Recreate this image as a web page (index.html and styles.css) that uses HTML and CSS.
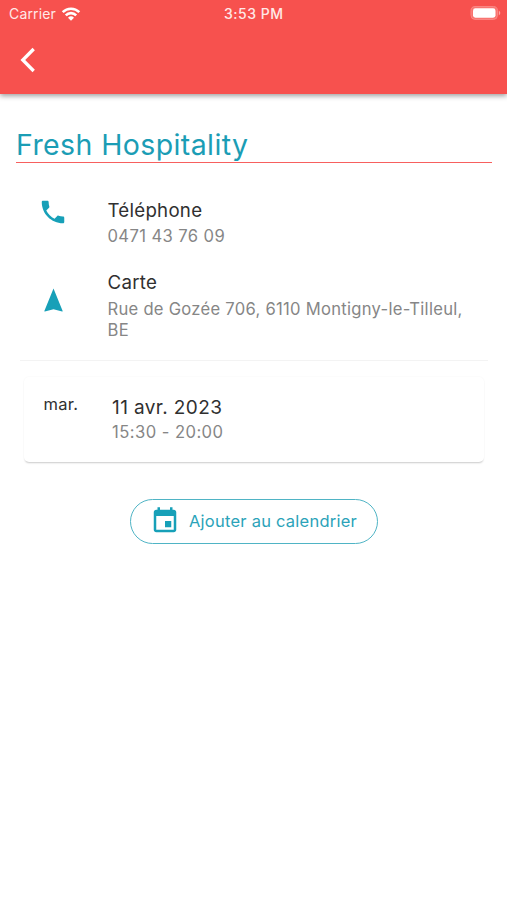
FILE: index.html
```html
<!DOCTYPE html>
<html lang="fr">
<head>
<meta charset="utf-8">
<title>Fresh Hospitality</title>
<link rel="stylesheet" href="styles.css">
</head>
<body>
<header class="app-bar">
  <div class="status">
    <div class="carrier">
      <span class="carrier-name">Carrier</span>
      <svg class="wifi" width="20" height="14" viewBox="0 0 20 14" fill="none" stroke="#fff" stroke-width="2.6">
        <path d="M1.7 5.2a11.8 11.8 0 0 1 16.6 0M4.8 8.3a7.4 7.4 0 0 1 10.4 0"/>
        <path d="M10 13.8L7 10.8a4.3 4.3 0 0 1 6 0z" fill="#fff" stroke="none"/>
      </svg>
    </div>
    <span class="time">3:53 PM</span>
    <svg class="battery" width="31" height="14" viewBox="0 0 31 14">
      <rect x="1" y=".6" width="26.4" height="12.8" rx="4" fill="#f9736f" stroke="#fa8a87"/>
      <rect x="3" y="2.3" width="22.5" height="9.4" rx="2.4" fill="#fff"/>
      <path d="M28.8 4.6q3 2.4 0 4.8z" fill="#fba5a3"/>
    </svg>
  </div>
  <button class="back" aria-label="Retour">
    <svg width="18" height="26" viewBox="0 0 18 26" fill="none" stroke="#fff" stroke-width="3.3"><path d="M15.7 2L4.8 13l10.9 11"/></svg>
  </button>
</header>
<main class="content">
  <h1 class="title">Fresh Hospitality</h1>
  <section class="row phone">
    <svg class="icon" width="30" height="30" viewBox="0 0 24 24"><path d="M6.62 10.79c1.44 2.83 3.76 5.14 6.59 6.59l2.2-2.2c.27-.27.67-.36 1.02-.24 1.12.37 2.33.57 3.57.57.55 0 1 .45 1 1V20c0 .55-.45 1-1 1-9.39 0-17-7.61-17-17 0-.55.45-1 1-1h3.5c.55 0 1 .45 1 1 0 1.25.2 2.45.57 3.57.11.35.03.74-.25 1.02l-2.2 2.2z"/></svg>
    <div>
      <div class="label">Téléphone</div>
      <div class="detail">0471 43 76 09</div>
    </div>
  </section>
  <section class="row map">
    <svg class="icon" width="30" height="30" viewBox="0 0 24 24"><path d="M12.4 2L5 20.2l.5.2 6.9-1.8 6.9 1.8.5-.2z"/></svg>
    <div>
      <div class="label">Carte</div>
      <div class="detail">Rue de Gozée 706, 6110 Montigny-le-Tilleul,<br>BE</div>
    </div>
  </section>
  <hr class="divider">
  <section class="card">
    <div class="day">mar.</div>
    <div>
      <div class="label date">11 avr. 2023</div>
      <div class="detail hours">15:30 - 20:00</div>
    </div>
  </section>
  <button class="calendar">
    <svg class="icon" width="30" height="30" viewBox="0 0 24 24"><path d="M17 12h-5v5h5v-5zM16 1v2H8V1H6v2H5c-1.11 0-1.99.9-1.99 2L3 19c0 1.1.89 2 2 2h14c1.1 0 2-.9 2-2V5c0-1.1-.9-2-2-2h-1V1h-2zm3 18H5V8h14v11z"/></svg>
    <span>Ajouter au calendrier</span>
  </button>
</main>
</body>
</html>
```
FILE: styles.css
```css
* { box-sizing: border-box; }
body {
  margin: 0;
  min-height: 900px;
  background: #fff;
  font-family: Inter, "Liberation Sans", sans-serif;
  color: #303030;
}
button { font: inherit; background: none; border: 0; padding: 0; }
.app-bar {
  height: 94px;
  background: #f7514e;
  box-shadow: 0 2px 5px rgba(0, 0, 0, .38);
}
.status {
  height: 27px;
  padding: 0 6px 0 9px;
  display: grid;
  grid-template-columns: 215px 1fr auto;
  align-items: center;
  color: #ffe9e8;
}
.carrier { display: flex; align-items: center; gap: 5px; }
.carrier-name { font-size: 14px; letter-spacing: .15px; }
.time { font-size: 14px; font-weight: 500; letter-spacing: .5px; }
.battery { margin-top: -1px; }
.back { display: block; margin: 20px 0 0 18px; height: 26px; }
.back svg { display: block; }
.content { padding: 36px 15px 0 16px; }
.title {
  margin: 0;
  height: 33px;
  border-bottom: 1px solid #f7605e;
  font-size: 28.5px;
  line-height: 30px;
  font-weight: 400;
  letter-spacing: .4px;
  color: #1b9db5;
}
.row { display: grid; grid-template-columns: 91.5px 1fr; }
.icon { display: block; fill: #17a0b8; }
.row .icon { margin-left: 22px; }
.phone { margin-top: 34px; }
.map { margin-top: 22px; }
.map .icon { margin-top: 17px; }
.label { font-size: 18.7px; line-height: 28px; letter-spacing: .25px; }
.detail { margin-top: 1px; font-size: 16.6px; line-height: 21px; letter-spacing: .27px; color: #868686; white-space: nowrap; }
.phone .detail { letter-spacing: .4px; }
.map .detail { margin-top: 2px; }
.divider { margin: 19px 4px 0; border: 0; height: 1px; background: #f3f3f3; }
.card {
  display: grid;
  grid-template-columns: 68.5px 1fr;
  margin: 16px 8px 0;
  height: 85px;
  padding: 17px 0 0 19.5px;
  border-radius: 5px;
  box-shadow: 0 2px 2px -1px rgba(0, 0, 0, .2), 0 0 2px rgba(0, 0, 0, .05);
}
.day { font-size: 16.5px; line-height: 21px; letter-spacing: .3px; }
.date { letter-spacing: .4px; font-size: 19px; line-height: 27px; }
.detail.hours { letter-spacing: .45px; }
.calendar {
  display: flex;
  align-items: center;
  gap: 9px;
  width: 248px;
  height: 45px;
  margin: 37px 0 0 114px;
  padding: 0 0 1px 19px;
  border: 1.5px solid #4fb4c5;
  border-radius: 23px;
  color: #2ba3b9;
  font-size: 16.5px;
  letter-spacing: .24px;
  white-space: nowrap;
}
```
